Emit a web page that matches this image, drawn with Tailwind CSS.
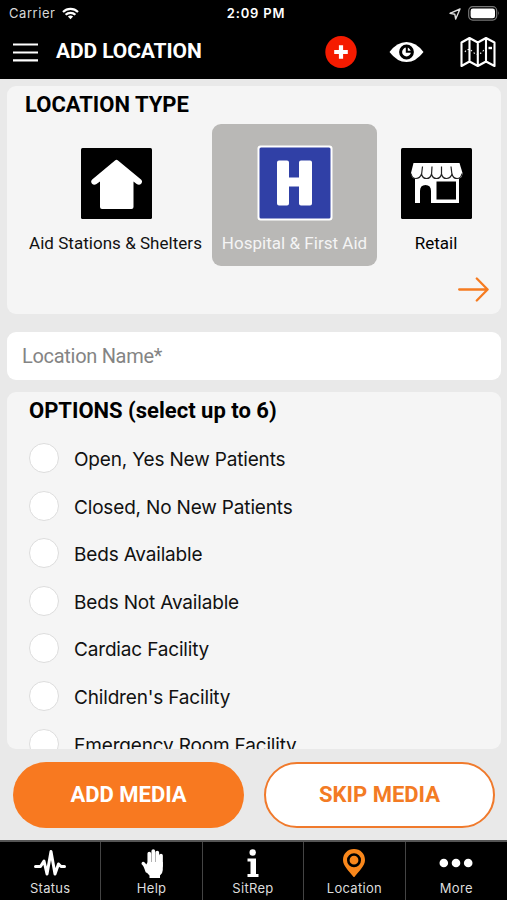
<!DOCTYPE html>
<html lang="en">
<head>
<meta charset="utf-8">
<title>Add Location</title>
<script src="https://cdn.jsdelivr.net/npm/@tailwindcss/browser@4"></script>
</head>
<body class="w-[507px] h-[900px] overflow-hidden bg-[#e9e9e9] font-[Roboto,sans-serif] text-[#111] flex flex-col">
<header class="h-[79px] shrink-0 bg-black text-white">
  <div class="h-[27px] grid grid-cols-3 items-center pl-[9px] pr-[7px] font-[Inter,sans-serif] text-[13px]">
    <div class="flex items-center gap-[7px] text-[#d8d8d8]"><span class="tracking-[0.55px]">Carrier</span>
      <svg width="17" height="13" viewBox="0 0 17 13" fill="none" stroke="#fff" stroke-width="2.2"><path d="M1 5a10.8 10.8 0 0 1 15 0M3.6 7.8a7 7 0 0 1 9.8 0"/><path d="M8.5 12.2L5.9 9.6a3.8 3.8 0 0 1 5.2 0z" fill="#fff" stroke="none"/></svg>
    </div>
    <div class="text-center font-semibold tracking-[0.8px] pl-[3px] whitespace-nowrap">2:09 PM</div>
    <div class="flex items-center justify-end gap-[7px]">
      <svg width="12" height="12" viewBox="0 0 12 12" fill="none" stroke="#ddd" stroke-width="1.4" stroke-linejoin="round"><path d="M11 1L1 5.3l4.8.9.9 4.8z"/></svg>
      <svg width="32" height="15" viewBox="0 0 32 15"><rect x=".7" y=".7" width="28" height="13.4" rx="4" fill="none" stroke="#777" stroke-width="1.2"/><rect x="2.6" y="2.6" width="24.4" height="9.6" rx="2.3" fill="#fff"/><path d="M30 5v4.6q1.7-2.3 0-4.6" fill="#777"/></svg>
    </div>
  </div>
  <div class="h-[50px] flex items-center pl-[13px] pr-[11px]">
    <svg width="25" height="19" viewBox="0 0 25 19" stroke="#fff" stroke-width="2.2"><path d="M0 1.5h25M0 9.5h25M0 17.3h25"/></svg>
    <h1 class="ml-[18px] text-[21px] font-bold tracking-[-0.1px] whitespace-nowrap">ADD LOCATION</h1>
    <svg class="ml-auto" width="32" height="33" viewBox="0 0 32 33"><ellipse cx="16" cy="16" rx="15.7" ry="16" fill="#f51b00"/><path d="M16 9.2v13.6M9.2 16h13.6" stroke="#fff" stroke-width="4.2"/></svg>
    <svg class="ml-[32px]" width="35" height="22" viewBox="0 0 35 22"><path d="M.5 11Q8 1 17.500 1T34.500 11Q27 21 17.500 21T.5 11z" fill="#fff"/><circle cx="17.500" cy="11" r="5.900" fill="#fff" stroke="#000" stroke-width="3"/><path d="M17.800 6v4.700h4.700" fill="none" stroke="#000" stroke-width="2"/></svg>
    <svg class="ml-[36px]" width="36" height="30" viewBox="0 0 36 30" fill="none" stroke="#fff" stroke-width="2.100" stroke-linejoin="round"><path d="M1.500 5.500L9.500 1l8.300 4.500L26 1l8.500 4.500v23.500L26 24.500l-8.200 4.500-8.300-4.500-8 4.500zM9.500 1v23.500M17.800 5.500v23.500M26 1v23.500"/><path d="M5 15q3-5 8 0t10-1q2-3 4-3" stroke-width="1.100" stroke-dasharray="1.500 2"/><path d="M28.500 11h3.500" stroke-width="2.400"/></svg>
  </div>
</header>

<main class="flex-1 min-h-0 pl-[7px] pr-[6px] pt-[7px]">
  <section class="h-[228px] rounded-[9px] bg-[#f5f5f5] flex flex-col">
    <h2 class="h-[38px] shrink-0 pl-[18px] leading-[37px] text-[22px] font-bold text-black">LOCATION TYPE</h2>
    <div class="flex text-[17px] leading-5 whitespace-nowrap">
      <div class="w-[205px] shrink-0 pl-[13px] pt-[24px] flex flex-col items-center">
        <svg width="71" height="71" viewBox="0 0 71 71"><rect width="71" height="71" rx="1.500"/><path d="M34 12.500q1.500-1.300 3 0L60 31.500q2 2 .2 4.200-2 2-4.500.3L52.500 33.500V59q0 2-2 2H21q-2 0-2-2V33.500L15.500 36q-2.500 1.700-4.500-.3-1.800-2.200.2-4.200z" fill="#fff"/></svg>
        <span class="mt-[14px] pr-[1px] tracking-[0.03px]">Aid Stations &amp; Shelters</span>
      </div>
      <div class="w-[165px] h-[142px] shrink-0 rounded-[9px] bg-[#b9b8b6] pt-[21px] flex flex-col items-center text-[#f4f4f4]">
        <svg width="76" height="76" viewBox="0 0 76 76"><rect x=".5" y=".5" width="75" height="75" rx="3" fill="#fff"/><rect x="2.500" y="2.500" width="71" height="71" rx="1.500" fill="#3040a6"/><path d="M22 15.500h8q2 0 2 2v15h10v-15q0-2 2-2h9q2 0 2 2v41q0 2-2 2h-9q-2 0-2-2v-17H32v17q0 2-2 2h-8q-2 0-2-2v-41q0-2 2-2z" fill="#fff"/></svg>
        <span class="mt-[12px] tracking-[0.03px]">Hospital &amp; First Aid</span>
      </div>
      <div class="flex-1 pt-[24px] pr-[6px] flex flex-col items-center">
        <svg width="71" height="71" viewBox="0 0 71 71"><rect width="71" height="71" rx="1.500"/><path d="M14 28h44v27H30V43q0-6-5.500-6T19 43v12h-5z" fill="#fff"/><rect x="35.500" y="33.500" width="19.500" height="18"/><path d="M12.500 15h46l3 10q0 5.500-5 5.500H15q-5 0-5-5.500z" fill="#fff"/><path d="M10 25.500q1 5 5 5t5.500-4.500q1 4.500 5 4.500t5-4.500q1 4.500 5 4.500t5-4.500q1 4.500 5 4.500t5.500-4.500q1 4.500 5 4.500t5-5M21.500 18.500L20.500 27M31 18.500L30.500 27M40.500 18.500V27M50 18.500L51 27" fill="none" stroke="#222" stroke-width="1.200"/></svg>
        <span class="mt-[14px] text-black">Retail</span>
      </div>
    </div>
    <div class="flex justify-end pr-[12px] pt-[11px]">
      <svg width="31" height="25" viewBox="0 0 31 25" fill="none" stroke="#f57b20" stroke-width="2.300" stroke-linecap="round" stroke-linejoin="round"><path d="M1.200 12.500h28.300M18.800 1.500l10.800 11-10.800 11"/></svg>
    </div>
  </section>

  <div class="mt-[18px] h-[48px] rounded-[9px] bg-white flex items-center pl-[15px] text-[20px] tracking-[-0.3px] text-[#848484]"><span>Location Name*</span></div>

  <section class="mt-[12px] h-[357px] rounded-[9px] bg-[#f5f5f5] overflow-hidden pl-[22px]">
    <h2 class="h-[43px] leading-[37px] text-[22px] font-bold text-black">OPTIONS (select up to 6)</h2>
    <ul class="font-[Inter,sans-serif] text-[19px] tracking-[-0.17px]">
      <li class="h-[47.6px] flex items-start gap-[15px]"><i class="size-[30px] mt-2 rounded-full border border-[#ddd] bg-white"></i><span class="leading-[50px]">Open, Yes New Patients</span></li>
      <li class="h-[47.6px] flex items-start gap-[15px]"><i class="size-[30px] mt-2 rounded-full border border-[#ddd] bg-white"></i><span class="leading-[50px]">Closed, No New Patients</span></li>
      <li class="h-[47.6px] flex items-start gap-[15px]"><i class="size-[30px] mt-2 rounded-full border border-[#ddd] bg-white"></i><span class="leading-[50px]">Beds Available</span></li>
      <li class="h-[47.6px] flex items-start gap-[15px]"><i class="size-[30px] mt-2 rounded-full border border-[#ddd] bg-white"></i><span class="leading-[50px]">Beds Not Available</span></li>
      <li class="h-[47.6px] flex items-start gap-[15px]"><i class="size-[30px] mt-2 rounded-full border border-[#ddd] bg-white"></i><span class="leading-[50px]">Cardiac Facility</span></li>
      <li class="h-[47.6px] flex items-start gap-[15px]"><i class="size-[30px] mt-2 rounded-full border border-[#ddd] bg-white"></i><span class="leading-[50px]">Children's Facility</span></li>
      <li class="h-[47.6px] flex items-start gap-[15px]"><i class="size-[30px] mt-2 rounded-full border border-[#ddd] bg-white"></i><span class="leading-[50px]">Emergency Room Facility</span></li>
    </ul>
  </section>

  <div class="mt-[13px] pl-[6px] pr-[6px] flex justify-between text-[22px] font-bold">
    <button class="w-[231px] h-[66px] pb-[2px] rounded-[33px] bg-[#f87920] text-white">ADD MEDIA</button>
    <button class="w-[231px] h-[66px] pb-[2px] rounded-[33px] bg-white border-2 border-[#f07a2c] text-[#f37b24]">SKIP MEDIA</button>
  </div>
</main>

<nav class="h-[60px] shrink-0 bg-black border-t-2 border-[#555] grid grid-cols-5 divide-x divide-[#444] text-[#ddd] font-[Inter,sans-serif] text-[13px] leading-4 tracking-[0.3px]">
  <div class="flex flex-col items-center pt-[7px]"><svg width="32" height="28" viewBox="0 0 32 28" fill="none" stroke="#fff" stroke-width="3" stroke-linecap="round" stroke-linejoin="round"><path d="M1.500 17.500h5l3.500-5.500 3 13 4-22.500 4 22.500 3.500-10 2.500 2.500h3.500"/></svg><span class="mt-[3px]">Status</span></div>
  <div class="flex flex-col items-center pt-[7px]"><svg width="24" height="29" viewBox="0 0 24 29" fill="none" stroke="#fff" stroke-width="3.700" stroke-linecap="round"><path d="M9.300 15V4.500M13.300 14V2M17.300 15V3.500M21 17V6.500"/><path d="M5 17l3-4h14.800v8q0 3-2.800 5.500V29H9.500v-2.500q-2.500-1.500-4-6z" fill="#fff" stroke="none"/><path d="M3.200 14.500q1.800 1 3.800 7.500" stroke-width="3.400"/></svg><span class="mt-[2px]">Help</span></div>
  <div class="flex flex-col items-center pt-[7px]"><svg width="14" height="28" viewBox="0 0 14 28" fill="#fff"><circle cx="6.700" cy="3.500" r="3.200"/><path d="M1.500 9.500h8.500v15.500h2.500v3H1.500v-3H4.500V12.500h-3z"/></svg><span class="mt-[3px]">SitRep</span></div>
  <div class="flex flex-col items-center pt-[7px]"><svg width="24" height="28" viewBox="0 0 24 28"><path d="M12 0C5.500 0 1 4.700 1 11c0 6 6 11 11 17.500C17 22 23 17 23 11 23 4.700 18.500 0 12 0z" fill="#f9871b"/><circle cx="12" cy="11.200" r="5.700" fill="#f9871b" stroke="#000" stroke-width="2.600"/></svg><span class="mt-[3px]">Location</span></div>
  <div class="flex flex-col items-center pt-[7px]"><svg width="34" height="28" viewBox="0 0 34 28" fill="#fff"><circle cx="4.800" cy="14" r="4.300"/><circle cx="17" cy="14" r="4.300"/><circle cx="29.200" cy="14" r="4.300"/></svg><span class="mt-[3px]">More</span></div>
</nav>
</body>
</html>
